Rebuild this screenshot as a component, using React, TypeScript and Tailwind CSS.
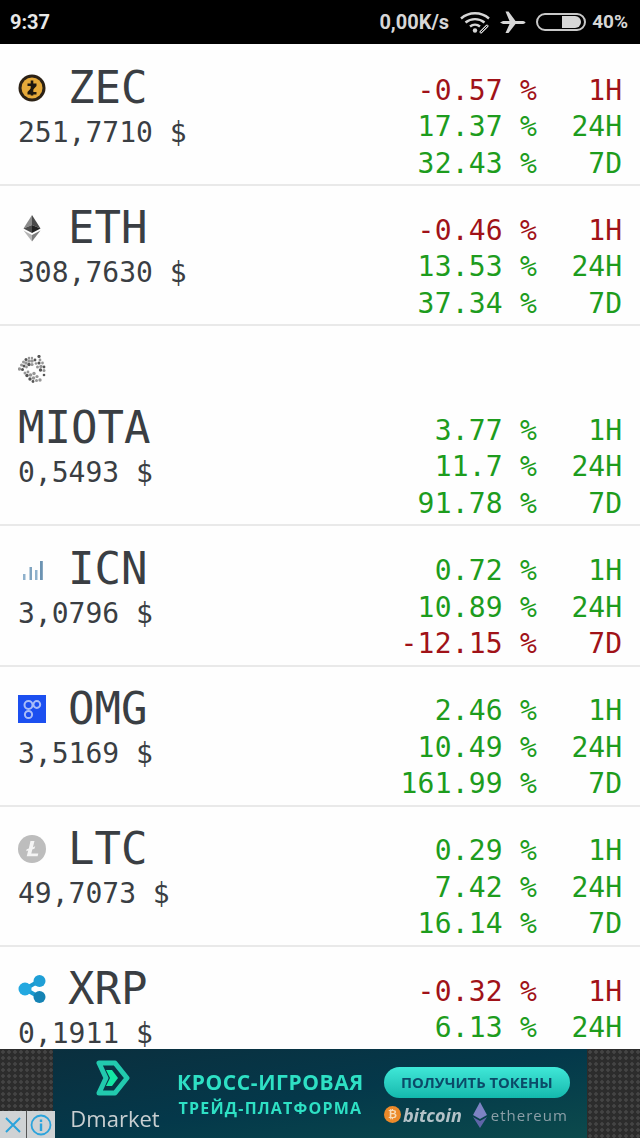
import React from 'react';

const ZecIcon = () => (
  <svg width="28" height="28" viewBox="0 0 28 28">
    <circle cx="14" cy="14" r="13.5" fill="#2b2115" />
    <circle cx="14" cy="14" r="10.5" fill="#e5a93a" />
    <path d="M9.5 9.5h9v2.4l-5.600 6h5.600v2.600h-9v-2.400l5.600-6H9.500z" fill="#1d1710" />
    <rect x="12.700" y="6.500" width="2.600" height="15" fill="#1d1710" />
  </svg>
);

const EthIcon = () => (
  <svg width="28" height="28" viewBox="0 0 28 28">
    <polygon points="14,1 5.500,14.500 14,11" fill="#8a8a8a" />
    <polygon points="14,1 22.500,14.500 14,11" fill="#4a4a4a" />
    <polygon points="5.500,14.500 14,11 14,19" fill="#4d4d4d" />
    <polygon points="22.500,14.500 14,11 14,19" fill="#222" />
    <polygon points="5.500,16.500 14,27.500 14,21" fill="#b5b5b5" />
    <polygon points="22.500,16.500 14,27.500 14,21" fill="#7d7d7d" />
  </svg>
);

// rough three lobed swirl of dots
const iotaDots: [number, number, number][] = [
  [21, 1.5, 1.6], [14, 3, 1.2], [11, 3, 1.3], [8, 4.500, 1.5], [11, 6, 1.7], [14, 6, 1.8], [17, 5, 1.4], [5.500, 7, 1.5],
  [8, 8, 1.7], [11, 9.500, 1.7], [14, 9.500, 1.6], [3.500, 10, 1.5], [6, 11, 1.5], [8.500, 12, 1.4], [1.500, 14, 1.7], [4.500, 14.500, 1.5],
  [22, 5, 1.4], [24.500, 8, 1.4], [21, 8, 1.6], [18, 8.500, 1.3], [23, 11.500, 1.7], [26, 12, 1.4], [19.500, 12, 1.5], [26, 15.500, 1.5], [22.500, 15, 1.7],
  [7, 18, 1.5], [10, 17, 1.4], [9, 20.500, 1.7], [12.500, 20, 1.8], [16, 18.500, 1.7], [12, 24, 1.7], [15.500, 23, 1.8], [19, 21.500, 1.6],
  [15, 26.500, 1.4], [18.500, 25.500, 1.5], [22, 25, 1.7], [26, 20, 1.3],
];

const IotaIcon = () => (
  <svg width="28" height="28" viewBox="0 0 28 28">
    {iotaDots.map(([cx, cy, r], i) => (
      <circle key={i} cx={cx} cy={cy} r={r} fill={i % 3 === 0 ? '#555' : '#969696'} />
    ))}
  </svg>
);

const IcnIcon = () => (
  <svg width="28" height="28" viewBox="0 0 28 28">
    <rect x="5" y="19" width="2.500" height="6" fill="#8fb1cc" />
    <rect x="11.500" y="12" width="2.500" height="13" fill="#7fa3bf" />
    <rect x="17" y="15" width="2.500" height="10" fill="#8fb1cc" />
    <rect x="22" y="6" width="2.800" height="19" fill="#6c93b2" />
  </svg>
);

const OmgIcon = () => (
  <svg width="28" height="28" viewBox="0 0 28 28">
    <rect width="28" height="28" fill="#1c4ff0" />
    <g fill="none" stroke="#a9bdf8" strokeWidth="2">
      <circle cx="10.500" cy="10" r="4" />
      <circle cx="18.800" cy="9.500" r="3.400" />
      <circle cx="10.500" cy="19.500" r="3.600" />
    </g>
  </svg>
);

const LtcIcon = () => (
  <svg width="28" height="28" viewBox="0 0 28 28">
    <circle cx="14" cy="14" r="14" fill="#bdbdbd" />
    <path d="M12.500 6h4l-1.600 6.200 2.300-.9-.6 2.200-2.300.9-1 4.100h7l-.7 2.700H8.700l1.500-5.800-2 .8.5-2 2.100-.8z" fill="#f4f4f4" />
  </svg>
);

const XrpIcon = () => (
  <svg width="28" height="28" viewBox="0 0 28 28">
    <g stroke="#1a9ad0" strokeWidth="4">
      <line x1="7" y1="14" x2="21" y2="6" />
      <line x1="7" y1="14" x2="21" y2="22" />
    </g>
    <circle cx="7" cy="14" r="6.500" fill="#23a8e0" />
    <circle cx="21.500" cy="6" r="6" fill="#1f9fd6" />
    <circle cx="21.500" cy="22" r="6" fill="#1583b4" />
  </svg>
);

const StatusBar = () => (
  <div className="flex h-11 shrink-0 items-center justify-between bg-black pl-[10px] pr-[12px] font-['Roboto',sans-serif] text-[20px] font-bold text-[#d6d6d6]">
    <span className="text-[#e8e8e8]">9:37</span>
    <div className="flex items-center">
      <span>0,00K/s</span>
      <svg width="34" height="24" viewBox="0 0 34 24" className="ml-[10px]">
        <g fill="none" stroke="#d6d6d6" strokeWidth="2.400">
          <path d="M2 8.500c8-7 20-7 28 0" />
          <path d="M6.500 12.500c5.500-4.500 13.500-4.500 19 0" />
          <path d="M11 16.500c3-2.500 7-2.500 10 0" />
        </g>
        <circle cx="16" cy="20.500" r="2.200" fill="#d6d6d6" />
        <path d="M22 22l6-6" stroke="#d6d6d6" strokeWidth="3" strokeLinecap="round" fill="none" />
        <path d="M22 22l6-6" stroke="#000" strokeWidth="1" strokeLinecap="round" fill="none" />
      </svg>
      <svg width="26" height="24" viewBox="0 0 26 24" className="ml-[7px]">
        <path
          d="M0 12.500l3-1.500h6.500L5.500 1.500h3l7 9.500h6c2.500 0 4 .7 4 1.500s-1.500 1.500-4 1.500h-6l-7 9h-3l4-9H3z"
          fill="#d6d6d6"
        />
      </svg>
      <div className="ml-[10px] flex h-[18px] w-[50px] items-center justify-end rounded-full border-2 border-[#c8c8c8] pr-[3px]">
        <div className="h-[12px] w-[19px] rounded-r-full bg-[#d6d6d6]" />
      </div>
      <span className="ml-[6px] text-[19px]">40%</span>
    </div>
  </div>
);

type Coin = {
  name: string;
  price: string;
  icon: React.ReactNode;
  changes: string[];
  stacked?: boolean;
};

const coins: Coin[] = [
  { name: 'ZEC', price: '251,7710 $', icon: <ZecIcon />, changes: ['-0.57', '17.37', '32.43'] },
  { name: 'ETH', price: '308,7630 $', icon: <EthIcon />, changes: ['-0.46', '13.53', '37.34'] },
  { name: 'MIOTA', price: '0,5493 $', icon: <IotaIcon />, changes: ['3.77', '11.7', '91.78'], stacked: true },
  { name: 'ICN', price: '3,0796 $', icon: <IcnIcon />, changes: ['0.72', '10.89', '-12.15'] },
  { name: 'OMG', price: '3,5169 $', icon: <OmgIcon />, changes: ['2.46', '10.49', '161.99'] },
  { name: 'LTC', price: '49,7073 $', icon: <LtcIcon />, changes: ['0.29', '7.42', '16.14'] },
  // third line sits under the ad
  { name: 'XRP', price: '0,1911 $', icon: <XrpIcon />, changes: ['-0.32', '6.13'] },
];

const periods = ['1H', '24H', '7D'];

const CoinRow = ({ coin }: { coin: Coin }) => (
  <div
    className={`flex shrink-0 items-end justify-between border-b-2 border-[#e9e9e9] bg-[#fefefe] px-[18px] font-['DejaVu_Sans_Mono',monospace] text-[#3a3e43] first:h-[142px] ${
      coin.stacked ? 'h-[200.2px]' : 'h-[140.2px]'
    }`}
  >
    <div className="flex flex-col pb-[33px]">
      {coin.stacked ? (
        <div className="flex flex-col">
          <div className="h-[28px] w-[28px]">{coin.icon}</div>
          <div className="mt-[19px] h-[52px] text-[44px] leading-[52px]">{coin.name}</div>
        </div>
      ) : (
        <div className="flex items-center">
          <div className="h-[28px] w-[28px]">{coin.icon}</div>
          <span className="ml-[22px] h-[52px] text-[44px] leading-[52px]">{coin.name}</span>
        </div>
      )}
      <div className="mt-[1px] text-[28px] leading-[36px]">{coin.price}</div>
    </div>
    <div className="flex h-[109.5px] flex-col pb-0 text-[28px] leading-[36.5px] mb-[2px]">
      {coin.changes.map((value, i) => (
        <div key={periods[i]} className={`flex justify-end ${value.startsWith('-') ? 'text-[#a01218]' : 'text-[#1d9c1d]'}`}>
          <span className="whitespace-pre tracking-[0.2px]">{value} %</span>
          <span className="w-[85px] text-right">{periods[i]}</span>
        </div>
      ))}
    </div>
  </div>
);

const AdSide = () => (
  <div className="w-[53px] shrink-0 bg-[#2c2c2c] bg-[radial-gradient(#444444_1.5px,transparent_2px)] bg-[length:6px_6px]" />
);

const AdBanner = () => (
  <div className="relative flex h-[89px] shrink-0">
    <AdSide />
    <div className="flex flex-1 items-center bg-gradient-to-br from-[#0a2f3e] via-[#04384a] to-[#0c4a4c] font-['Open_Sans',sans-serif]">
      <div className="flex w-[124px] flex-col items-center blur-[0.4px]">
        <svg width="34" height="36" viewBox="0 0 34 36" className="mb-[11px] mr-[4px] mt-[2px]">
          <path d="M3 3h16l12 15-12 15H3l7-15z" fill="none" stroke="#22c9ae" strokeWidth="5" strokeLinejoin="round" />
          <path d="M10 10h6l6 8-6 8h-6l4-8z" fill="#14e6a4" />
        </svg>
        <span className="text-[22px] leading-[22px] text-[#c9cfd1]">Dmarket</span>
      </div>
      <div className="flex flex-col items-center text-[#2ee0c4] blur-[0.4px]">
        <span className="text-[21px] font-bold leading-[26px] tracking-[0.6px]">КРОСС-ИГРОВАЯ</span>
        <span className="mt-[2px] text-[16px] font-bold leading-[22px] tracking-[1.2px]">ТРЕЙД-ПЛАТФОРМА</span>
      </div>
      <div className="ml-[20px] flex flex-col pt-[7px] blur-[0.4px]">
        <div className="flex h-[31px] w-[186px] items-center justify-center rounded-full bg-gradient-to-b from-[#3fe8d8] to-[#12b9ad] text-[14.8px] font-bold text-[#0b4a68]">
          ПОЛУЧИТЬ ТОКЕНЫ
        </div>
        <div className="mt-[4px] flex items-center">
          <div className="flex h-[17px] w-[17px] items-center justify-center rounded-full bg-[#ec8a2a] text-[11px] font-bold text-[#f6dcb8]">₿</div>
          <span className="ml-[2px] text-[18px] font-bold italic leading-[24px] text-[#b4c2c8]">bitcoin</span>
          <svg width="14" height="26" viewBox="0 0 14 26" className="ml-[11px]">
            <polygon points="7,0 0,13 7,17 14,13" fill="#7d83c4" />
            <polygon points="0,15 7,26 14,15 7,19" fill="#5f65a8" />
          </svg>
          <span className="ml-[4px] text-[15px] leading-[24px] tracking-[1px] text-[#8c9fa8]">ethereum</span>
        </div>
      </div>
    </div>
    <AdSide />
    <div className="absolute bottom-0 left-0 flex h-[27px] w-[55px] bg-[#cfd2d4]">
      <div className="flex w-[27px] items-center justify-center border-r border-[#555]">
        <svg width="20" height="20" viewBox="0 0 20 20">
          <path d="M3 3l14 14M17 3L3 17" stroke="#2aa3dc" strokeWidth="2" />
        </svg>
      </div>
      <div className="flex flex-1 items-center justify-center">
        <svg width="22" height="22" viewBox="0 0 22 22">
          <circle cx="11" cy="11" r="9.500" fill="none" stroke="#2aa3dc" strokeWidth="1.800" />
          <rect x="9.800" y="9.500" width="2.400" height="7.500" fill="#2aa3dc" />
          <rect x="9.800" y="5.500" width="2.400" height="2.500" fill="#2aa3dc" />
        </svg>
      </div>
    </div>
  </div>
);

export default function App() {
  return (
    <div className="flex h-[1138px] w-[640px] flex-col overflow-hidden bg-white">
      <StatusBar />
      <div className="flex min-h-0 flex-1 flex-col overflow-hidden">
        {coins.map((coin) => (
          <CoinRow key={coin.name} coin={coin} />
        ))}
      </div>
      <AdBanner />
    </div>
  );
}
